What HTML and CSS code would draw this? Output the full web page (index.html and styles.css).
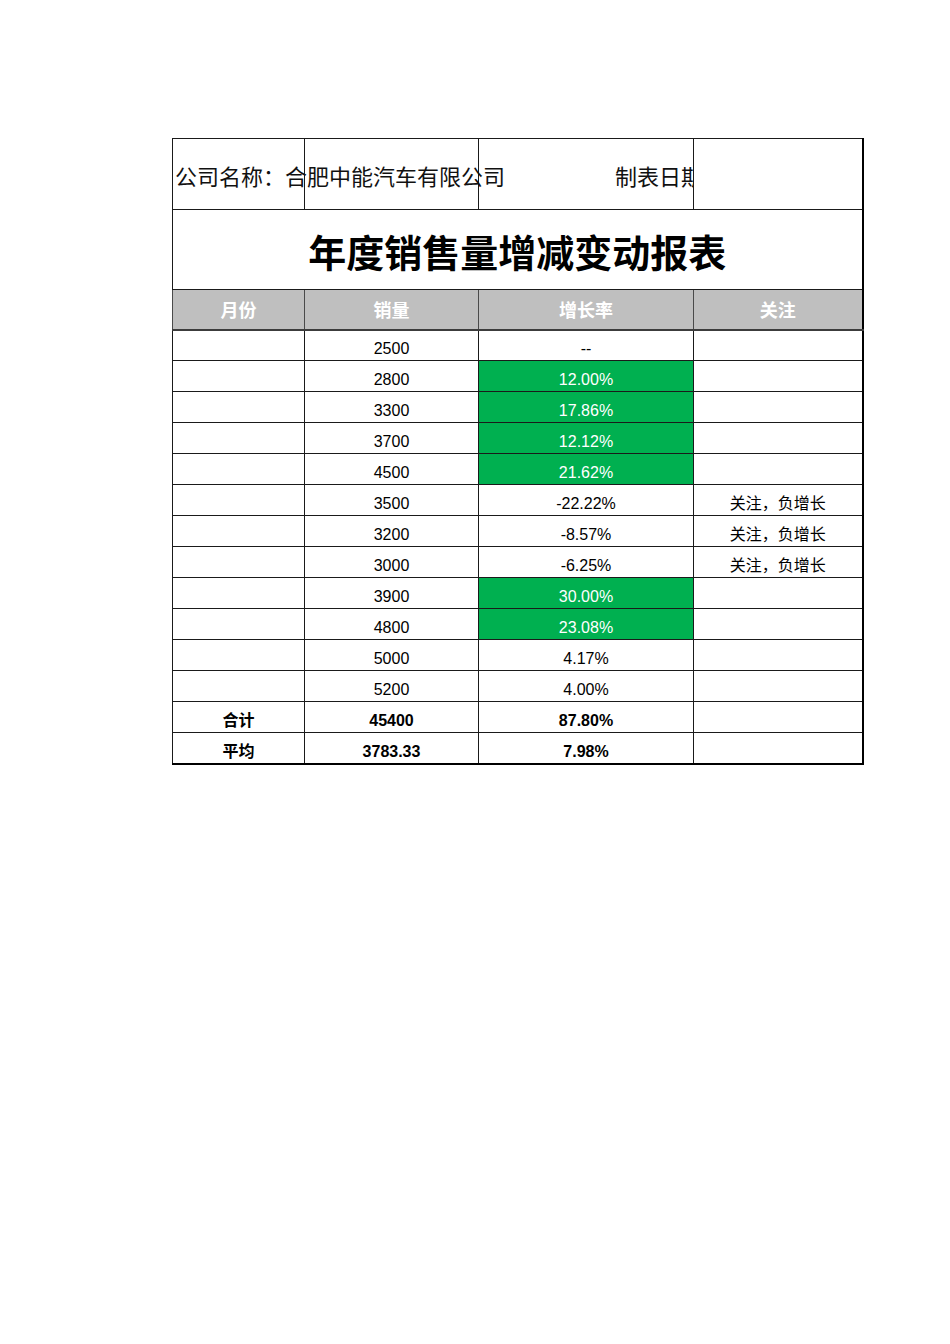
FILE: index.html
```html
<!DOCTYPE html>
<html lang="zh">
<head>
<meta charset="utf-8">
<title>年度销售量增减变动报表</title>
<link rel="stylesheet" href="styles.css">
</head>
<body>
<div class="page">
  <table class="sheet">
    <colgroup>
      <col class="c1"><col class="c2"><col class="c3"><col class="c4">
    </colgroup>
    <tr class="info">
      <td class="overflow"><span>公司名称：合肥中能汽车有限公司</span></td>
      <td></td>
      <td class="clip"><span>制表日期：</span></td>
      <td></td>
    </tr>
    <tr class="title">
      <td colspan="4">年度销售量增减变动报表</td>
    </tr>
    <tr class="head">
      <th>月份</th><th>销量</th><th>增长率</th><th>关注</th>
    </tr>
    <tr><td></td><td>2500</td><td>--</td><td></td></tr>
    <tr><td></td><td>2800</td><td class="up">12.00%</td><td></td></tr>
    <tr><td></td><td>3300</td><td class="up">17.86%</td><td></td></tr>
    <tr><td></td><td>3700</td><td class="up">12.12%</td><td></td></tr>
    <tr><td></td><td>4500</td><td class="up">21.62%</td><td></td></tr>
    <tr><td></td><td>3500</td><td>-22.22%</td><td>关注，负增长</td></tr>
    <tr><td></td><td>3200</td><td>-8.57%</td><td>关注，负增长</td></tr>
    <tr><td></td><td>3000</td><td>-6.25%</td><td>关注，负增长</td></tr>
    <tr><td></td><td>3900</td><td class="up">30.00%</td><td></td></tr>
    <tr><td></td><td>4800</td><td class="up">23.08%</td><td></td></tr>
    <tr><td></td><td>5000</td><td>4.17%</td><td></td></tr>
    <tr><td></td><td>5200</td><td>4.00%</td><td></td></tr>
    <tr class="sum"><td>合计</td><td>45400</td><td>87.80%</td><td></td></tr>
    <tr class="sum last"><td>平均</td><td>3783.33</td><td>7.98%</td><td></td></tr>
  </table>
</div>
</body>
</html>
```

FILE: styles.css
```css
html, body {
  margin: 0;
  padding: 0;
  background: #ffffff;
}

.page {
  padding: 138px 0 0 172px;
}

.sheet {
  border-collapse: collapse;
  table-layout: fixed;
  width: 690px;
  font-family: "Liberation Sans", "Noto Sans CJK SC", sans-serif;
  color: #000;
}

.c1 { width: 132px; }
.c2 { width: 174px; }
.c3 { width: 215px; }
.c4 { width: 169px; }

.sheet td,
.sheet th {
  border: 1px solid #1a1a1a;
  padding: 0;
  height: 31px;
  font-size: 16px;
  font-weight: normal;
  text-align: center;
  vertical-align: bottom;
  padding-bottom: 1px;
  box-sizing: border-box;
  line-height: 20px;
  white-space: nowrap;
}

.sheet tr.info td {
  height: 71px;
  font-family: "Noto Sans CJK SC", sans-serif;
  font-size: 22px;
  text-align: left;
  vertical-align: middle;
  padding: 2px 0 0 0;
  line-height: 30px;
  color: #111;
}

.sheet tr.info td.overflow {
  overflow: visible;
  padding-left: 2px;
}

.sheet tr.info td.clip {
  overflow: hidden;
  padding-left: 136px;
}

.sheet tr.title td {
  height: 80px;
  font-family: "Noto Sans CJK SC", sans-serif;
  font-size: 38px;
  font-weight: bold;
  text-align: center;
  vertical-align: middle;
  padding: 2px 0 0 0;
  line-height: 44px;
}

.sheet tr.head th {
  height: 40px;
  background: #bfbfbf;
  color: #ffffff;
  font-family: "Noto Sans CJK SC", sans-serif;
  font-size: 18px;
  font-weight: bold;
  vertical-align: middle;
  padding: 0;
  border-bottom: 2px solid #3c3c3c;
  border-left-color: #4a4a4a;
  border-right-color: #4a4a4a;
}

.sheet td.up {
  background: #00b050;
  color: #ffffff;
}

.sheet tr.sum td {
  font-weight: bold;
}

.sheet tr.last td {
  border-bottom: 2px solid #000;
}

.sheet tr td:last-child,
.sheet tr th:last-child {
  border-right: 2px solid #000;
}
```
